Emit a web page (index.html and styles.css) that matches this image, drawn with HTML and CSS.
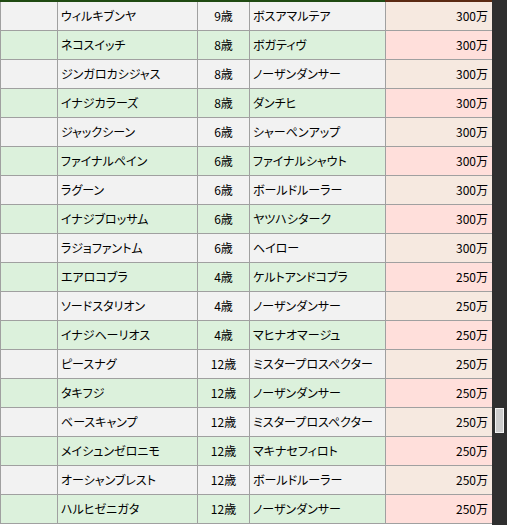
FILE: index.html
```html
<!DOCTYPE html>
<html lang="ja">
<head>
<meta charset="utf-8">
<link rel="stylesheet" href="styles.css">
</head>
<body>
<div class="frame">
  <div class="list">
    <div class="head-strip">
      <div class="head-main"></div>
      <div class="head-price"></div>
    </div>
    <table class="stallions">
      <colgroup>
        <col class="c-blank"><col class="c-name"><col class="c-age"><col class="c-sire"><col class="c-price">
      </colgroup>
      <tbody>
        <tr class="odd"><td></td><td class="name">ウィルキブンヤ</td><td class="age">9歳</td><td class="sire">ボスアマルテア</td><td class="price">300万</td></tr>
        <tr class="even"><td></td><td class="name">ネコスイッチ</td><td class="age">8歳</td><td class="sire">ボガティヴ</td><td class="price">300万</td></tr>
        <tr class="odd"><td></td><td class="name">ジンガロカシジャス</td><td class="age">8歳</td><td class="sire">ノーザンダンサー</td><td class="price">300万</td></tr>
        <tr class="even"><td></td><td class="name">イナジカラーズ</td><td class="age">8歳</td><td class="sire">ダンチヒ</td><td class="price">300万</td></tr>
        <tr class="odd"><td></td><td class="name">ジャックシーン</td><td class="age">6歳</td><td class="sire">シャーペンアップ</td><td class="price">300万</td></tr>
        <tr class="even"><td></td><td class="name">ファイナルペイン</td><td class="age">6歳</td><td class="sire">ファイナルシャウト</td><td class="price">300万</td></tr>
        <tr class="odd"><td></td><td class="name">ラグーン</td><td class="age">6歳</td><td class="sire">ボールドルーラー</td><td class="price">300万</td></tr>
        <tr class="even"><td></td><td class="name">イナジブロッサム</td><td class="age">6歳</td><td class="sire">ヤツハシターク</td><td class="price">300万</td></tr>
        <tr class="odd"><td></td><td class="name">ラジョファントム</td><td class="age">6歳</td><td class="sire">ヘイロー</td><td class="price">300万</td></tr>
        <tr class="even"><td></td><td class="name">エアロコブラ</td><td class="age">4歳</td><td class="sire">ケルトアンドコブラ</td><td class="price">250万</td></tr>
        <tr class="odd"><td></td><td class="name">ソードスタリオン</td><td class="age">4歳</td><td class="sire">ノーザンダンサー</td><td class="price">250万</td></tr>
        <tr class="even"><td></td><td class="name">イナジヘーリオス</td><td class="age">4歳</td><td class="sire">マヒナオマージュ</td><td class="price">250万</td></tr>
        <tr class="odd"><td></td><td class="name">ピースナグ</td><td class="age">12歳</td><td class="sire">ミスタープロスペクター</td><td class="price">250万</td></tr>
        <tr class="even"><td></td><td class="name">タキフジ</td><td class="age">12歳</td><td class="sire">ノーザンダンサー</td><td class="price">250万</td></tr>
        <tr class="odd"><td></td><td class="name">ベースキャンプ</td><td class="age">12歳</td><td class="sire">ミスタープロスペクター</td><td class="price">250万</td></tr>
        <tr class="even"><td></td><td class="name">メイシュンゼロニモ</td><td class="age">12歳</td><td class="sire">マキナセフィロト</td><td class="price">250万</td></tr>
        <tr class="odd"><td></td><td class="name">オーシャンブレスト</td><td class="age">12歳</td><td class="sire">ボールドルーラー</td><td class="price">250万</td></tr>
        <tr class="even"><td></td><td class="name">ハルヒゼニガタ</td><td class="age">12歳</td><td class="sire">ノーザンダンサー</td><td class="price">250万</td></tr>
      </tbody>
    </table>
  </div>
  <div class="scrollbar"><div class="thumb"></div></div>
</div>
</body>
</html>
```
FILE: styles.css
```css
html, body {
  margin: 0;
  padding: 0;
  background: #ffffff;
}
.frame {
  display: flex;
  width: 507px;
  height: 525px;
  overflow: hidden;
  font-family: "Noto Sans CJK JP", "Noto Sans", sans-serif;
  font-size: 12px;
  font-feature-settings: "palt";
  color: #000;
}
.list {
  width: 492px;
  flex: none;
}
.head-strip {
  display: flex;
  height: 2px;
}
.head-main {
  width: 385px;
  background: #1f4a12;
}
.head-price {
  flex: 1;
  background: #5b2a12;
}
.stallions {
  border-collapse: collapse;
  table-layout: fixed;
  width: 492px;
}
.c-blank { width: 57px; }
.c-name { width: 140px; }
.c-age { width: 52px; }
.c-sire { width: 136px; }
.c-price { width: 107px; }
.stallions td {
  height: 28px;
  padding: 0 3px;
  border: 1px solid #a0a0a0;
  white-space: nowrap;
  overflow: hidden;
  line-height: 16px;
  vertical-align: middle;
}
.stallions tr:first-child td {
  border-top: none;
}
.odd td { background: #f2f2f2; }
.even td { background: #dcf1dc; }
.odd td.price { background: #f6e9e0; }
.even td.price { background: #ffdfdb; }
.age { text-align: center; }
.price { text-align: right; }
.stallions td.price { padding-right: 4px; }
.scrollbar {
  flex: 1;
  background: #2f2f2f;
  display: flex;
  justify-content: center;
  padding-top: 408px;
  box-sizing: border-box;
}
.thumb {
  width: 7px;
  height: 23px;
  background: #cdcdcd;
  border: 1px solid #f2f2f2;
}
```
